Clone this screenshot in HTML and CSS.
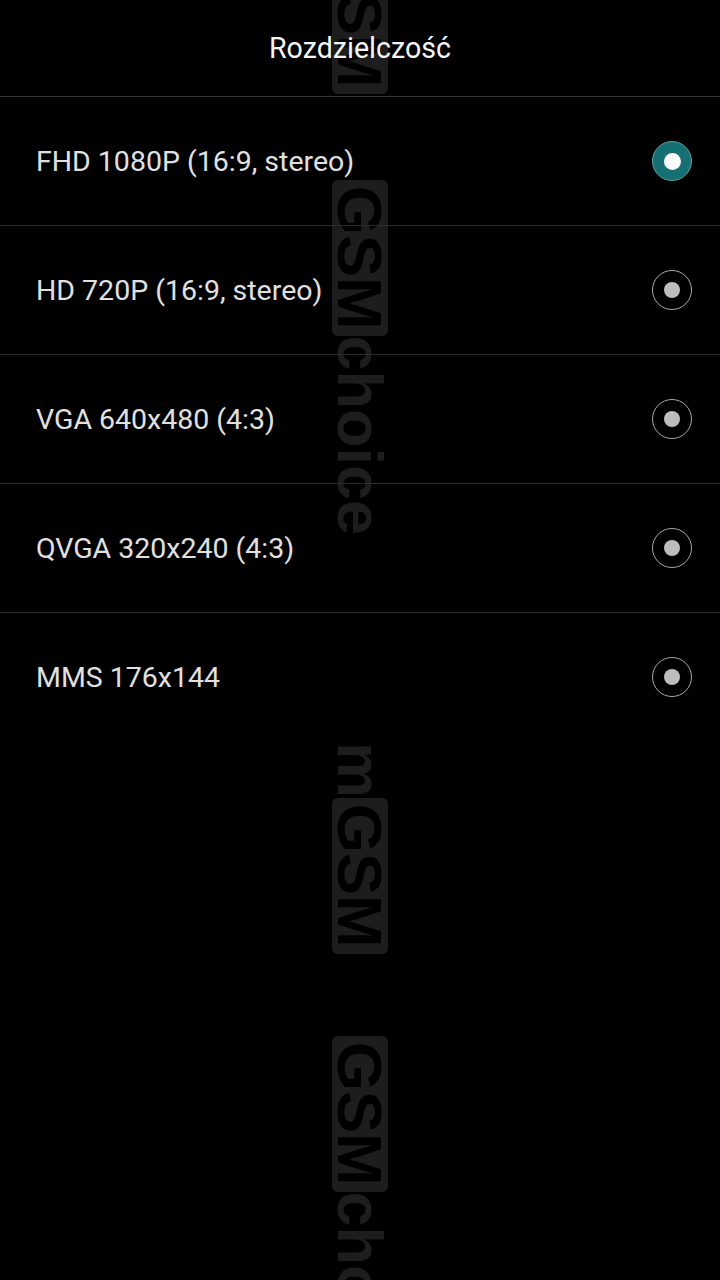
FILE: index.html
```html
<!DOCTYPE html>
<html lang="pl">
<head>
<meta charset="utf-8">
<title>Rozdzielczość</title>
<link rel="stylesheet" href="styles.css">
</head>
<body>
<div class="screen">
  <div class="watermark" aria-hidden="true">
    <div class="wm wm1"><span class="wm-box">GSM</span></div>
    <div class="wm wm2"><span class="wm-box">GSM</span><span class="wm-txt">choice</span></div>
    <div class="wm wm3"><span class="wm-txt">m</span><span class="wm-box">GSM</span></div>
    <div class="wm wm4"><span class="wm-box">GSM</span><span class="wm-txt">choice</span></div>
  </div>
  <header class="title">Rozdzielczość</header>
  <ul class="list">
    <li class="row"><span class="label">FHD 1080P (16:9, stereo)</span><span class="radio checked"></span></li>
    <li class="row"><span class="label">HD 720P (16:9, stereo)</span><span class="radio"></span></li>
    <li class="row"><span class="label">VGA 640x480 (4:3)</span><span class="radio"></span></li>
    <li class="row"><span class="label">QVGA 320x240 (4:3)</span><span class="radio"></span></li>
    <li class="row last"><span class="label">MMS 176x144</span><span class="radio"></span></li>
  </ul>
</div>
</body>
</html>
```

FILE: styles.css
```css
html, body {
  margin: 0;
  padding: 0;
  background: #000;
}
body {
  font-family: Roboto, "Liberation Sans", sans-serif;
  color: #e6e6e6;
}
.screen {
  position: relative;
  width: 720px;
  height: 1280px;
  overflow: hidden;
  background: #000;
}
.watermark {
  position: absolute;
  left: 332px;
  top: 0;
  width: 56px;
  height: 1280px;
  z-index: 0;
}
.wm {
  position: absolute;
  left: 0;
  writing-mode: vertical-rl;
  font-family: "Liberation Sans", Arial, sans-serif;
  font-weight: bold;
  font-size: 63px;
  line-height: 56px;
  white-space: nowrap;
}
.wm-box {
  display: inline-block;
  background: #1d1d1d;
  color: #000;
  border-radius: 6px;
  padding: 6px 0;
}
.wm-txt {
  color: #1d1d1d;
}
.wm1 { top: -62px; }
.wm2 { top: 180px; }
.wm3 { top: 742px; }
.wm4 { top: 1036px; }

.title {
  position: relative;
  z-index: 1;
  height: 96px;
  display: flex;
  align-items: center;
  justify-content: center;
  font-size: 28.6px;
  color: #f4f4f4;
  border-bottom: 1px solid #333;
}
.list {
  position: relative;
  z-index: 1;
  list-style: none;
  margin: 0;
  padding: 0;
}
.row {
  height: 128px;
  display: flex;
  align-items: center;
  justify-content: space-between;
  padding: 0 28px 0 36px;
  border-bottom: 1px solid #2c2c2c;
}
.row.last {
  border-bottom: none;
}
.label {
  font-size: 28.5px;
  color: #e0e0e0;
}
.radio {
  box-sizing: border-box;
  width: 40px;
  height: 40px;
  border-radius: 50%;
  border: 1.5px solid #a8a8a8;
  display: flex;
  align-items: center;
  justify-content: center;
}
.radio::after {
  content: "";
  width: 16px;
  height: 16px;
  border-radius: 50%;
  background: #bdbdbd;
}
.radio.checked {
  background: #167073;
  border-color: #5a9fa1;
}
.radio.checked::after {
  width: 17px;
  height: 17px;
  background: #fafafa;
}
```
